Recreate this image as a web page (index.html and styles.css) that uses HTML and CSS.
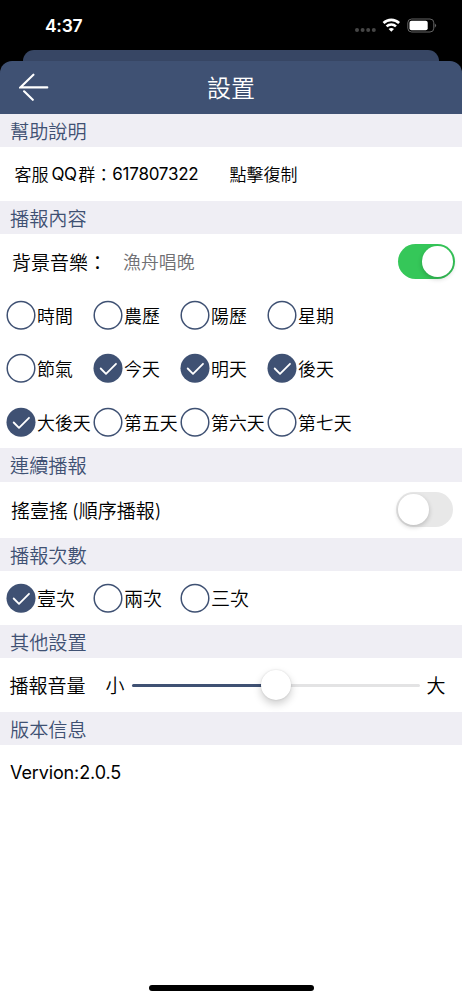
FILE: index.html
```html
<!DOCTYPE html>
<html lang="zh-Hant">
<head>
<meta charset="utf-8">
<meta name="viewport" content="width=device-width">
<title>設置</title>
<link rel="stylesheet" href="styles.css">
</head>
<body>
<svg width="0" height="0" class="defs" aria-hidden="true">
  <symbol id="off" viewBox="0 0 30 30"><circle cx="15" cy="15.3" r="13.8" fill="#fff" stroke="#3f5173" stroke-width="1.5"/></symbol>
  <symbol id="on" viewBox="0 0 30 30"><circle cx="15" cy="15.3" r="14.5" fill="#3f5173"/><path d="M7.7 15.5 L13 20.8 L23 10.8" fill="none" stroke="#fff" stroke-width="1.8" stroke-linecap="round" stroke-linejoin="round"/></symbol>
</svg>
<div class="screen">
  <div class="status">
    <span class="time">4:37</span>
    <svg class="signals" width="84" height="18" viewBox="0 0 84 18">
      <g fill="#464646"><circle cx="4" cy="14" r="2"/><circle cx="9.6" cy="14" r="2"/><circle cx="15.2" cy="14" r="2"/><circle cx="20.8" cy="14" r="2"/></g>
      <g fill="none" stroke="#fff" stroke-width="2.6"><path d="M30.5 7 A11.2 11.2 0 0 1 46.1 7"/><path d="M33.6 10.4 A6.8 6.8 0 0 1 43 10.4"/></g>
      <path d="M35.6 13 Q38.3 10.9 41 13 L38.3 15.8Z" fill="#fff"/>
      <rect x="54.8" y="3" width="26" height="13" rx="3.8" fill="none" stroke="#656565" stroke-width="1"/>
      <rect x="56.5" y="4.8" width="18.2" height="9.4" rx="2" fill="#fff"/>
      <path d="M81.8 7.5 Q84.4 9.5 81.8 11.7Z" fill="#656565"/>
    </svg>
  </div>
  <div class="back-card"></div>
  <header class="header">
    <svg class="back" width="30" height="28" viewBox="0 0 30 28" fill="none" stroke="#fff" stroke-width="2.1" stroke-linecap="round"><path d="M28.3 14.4H1.3L14.4 1.7M5.1 18.3L13.8 26.8"/></svg>
    <h1 class="title">設置</h1>
  </header>
  <h2 class="band">幫助說明</h2>
  <div class="row row-help">
    <span class="cjk">客服</span><span class="qq">QQ</span><span class="cjk">群：</span><span class="num">617807322</span><span class="copy">點擊復制</span>
  </div>
  <h2 class="band">播報內容</h2>
  <div class="row row-music">
    <span class="label">背景音樂：</span><span class="song">漁舟唱晚</span><span class="switch on"><i class="knob"></i></span>
  </div>
  <div class="options">
    <div class="opt"><svg class="check"><use href="#off"/></svg>時間</div>
    <div class="opt"><svg class="check"><use href="#off"/></svg>農歷</div>
    <div class="opt"><svg class="check"><use href="#off"/></svg>陽歷</div>
    <div class="opt"><svg class="check"><use href="#off"/></svg>星期</div>
    <div class="opt"><svg class="check"><use href="#off"/></svg>節氣</div>
    <div class="opt"><svg class="check"><use href="#on"/></svg>今天</div>
    <div class="opt"><svg class="check"><use href="#on"/></svg>明天</div>
    <div class="opt"><svg class="check"><use href="#on"/></svg>後天</div>
    <div class="opt"><svg class="check"><use href="#on"/></svg>大後天</div>
    <div class="opt"><svg class="check"><use href="#off"/></svg>第五天</div>
    <div class="opt"><svg class="check"><use href="#off"/></svg>第六天</div>
    <div class="opt"><svg class="check"><use href="#off"/></svg>第七天</div>
  </div>
  <h2 class="band">連續播報</h2>
  <div class="row row-shake">
    <span class="label">搖壹搖<span class="paren">(</span>順序播報)</span><span class="switch"><i class="knob"></i></span>
  </div>
  <h2 class="band">播報次數</h2>
  <div class="options times">
    <div class="opt"><svg class="check"><use href="#on"/></svg>壹次</div>
    <div class="opt"><svg class="check"><use href="#off"/></svg>兩次</div>
    <div class="opt"><svg class="check"><use href="#off"/></svg>三次</div>
  </div>
  <h2 class="band">其他設置</h2>
  <div class="row row-volume">
    <span class="label">播報音量</span><span class="small">小</span>
    <div class="slider"><div class="fill"></div><i class="knob"></i></div>
    <span class="large">大</span>
  </div>
  <h2 class="band">版本信息</h2>
  <div class="row row-version">Vervion:2.0.5</div>
  <div class="home"></div>
</div>
</body>
</html>
```
FILE: styles.css
```css
* { box-sizing: border-box; }
body { margin: 0; background: #000; }
.defs { display: block; position: absolute; }
.screen {
  width: 462px;
  height: 1000px;
  display: flex;
  flex-direction: column;
  overflow: hidden;
  background: linear-gradient(#000 100px, #fff 100px);
  color: #000;
  font-family: Inter, "Noto Sans CJK TC DemiLight", "Noto Sans CJK TC", sans-serif;
  font-size: 17.9px;
  font-weight: 350;
  white-space: nowrap;
}
.status {
  height: 49.5px;
  flex: none;
  display: flex;
  justify-content: space-between;
  align-items: flex-start;
  padding: 16px 25px 0 45px;
}
.time { color: #fff; font-size: 17.5px; line-height: 20px; font-weight: 600; letter-spacing: -0.3px; }
.back-card {
  height: 11px;
  flex: none;
  margin: 0 23px;
  background: #374664;
  border-radius: 11px 11px 0 0;
}
.header {
  height: 53.5px;
  flex: none;
  display: grid;
  grid-template-columns: 60px 1fr 60px;
  align-items: center;
  background: #3f5173;
  border-radius: 12px 12px 0 0;
}
.back { margin-left: 18.5px; }
.title { margin: 0; padding-top: 3px; text-align: center; color: #fff; font-size: 24px; line-height: 36px; font-weight: 350; }
.band {
  margin: 0;
  height: 33.3px;
  flex: none;
  padding: 2px 0 0 10px;
  background: #efeef4;
  color: #3f5173;
  font-size: 19.2px;
  line-height: 33px;
  font-weight: 350;
}
.row { flex: none; display: flex; align-items: center; }
.row-help { height: 53.7px; padding-left: 14.5px; font-size: 17px; }
.row-help .cjk, .copy { margin-top: -2px; }
.qq { margin: 0 2px 0 3px; letter-spacing: -0.6px; font-weight: 400; }
.num { letter-spacing: -0.25px; font-weight: 400; }
.copy { margin-left: 31px; }
.row-music { height: 53.7px; padding: 0 7px 0 12px; }
.label { font-size: 19px; }
.song { margin-left: 16px; color: #707074; }
.switch {
  width: 57px;
  height: 34.6px;
  margin: 1px 0 0 auto;
  display: flex;
  align-items: center;
  padding: 0 2px;
  border-radius: 18px;
  background: #e8e8e8;
}
.knob { width: 30.6px; height: 30.6px; border-radius: 50%; background: #fff; box-shadow: 0 2px 5px #0003; }
.on { justify-content: flex-end; background: #35c759; }
.options {
  flex: none;
  display: grid;
  grid-template-columns: repeat(4, 87px);
  grid-auto-rows: 53.5px;
  padding-left: 6.4px;
}
.opt { display: flex; align-items: center; gap: 0.6px; }
.check { width: 30px; height: 30px; flex: none; }
.times { font-size: 19px; }
.row-shake { height: 56px; padding: 0 9px 0 11px; }
.row-shake .switch { margin-top: 0; }
.paren { margin-left: 4px; }
.row-volume { height: 54px; padding-left: 9.5px; font-size: 19px; }
.small { margin-left: 20px; }
.slider { position: relative; width: 288px; height: 3.5px; margin: 1px 7px 0; border-radius: 2px; background: #e3e3e4; }
.fill { width: 50%; height: 100%; border-radius: 2px; background: #3f5173; }
.slider .knob { position: absolute; left: 129px; top: -14px; box-shadow: 0 4px 9px #0003, 0 0 2px #0002; }
.row-version { height: 54px; padding: 1px 0 0 10px; font-size: 18px; font-weight: 400; letter-spacing: -0.12px; }
.home { width: 165px; height: 6px; flex: none; margin: auto auto 9px; border-radius: 3px; background: #000; }
```
